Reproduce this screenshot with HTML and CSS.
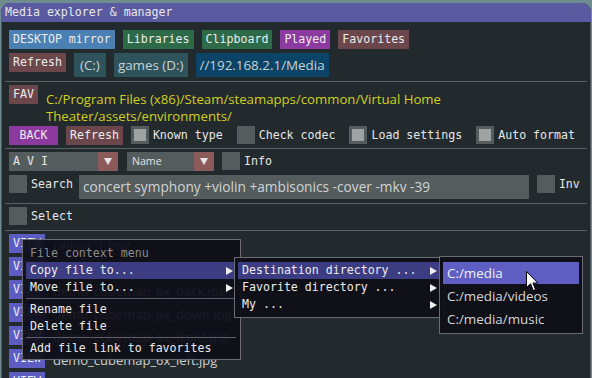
FILE: index.html
```html
<!DOCTYPE html>
<html lang="en">
<head>
  <meta charset="UTF-8">
  <title>Media explorer &amp; manager</title>
  <link rel="stylesheet" href="styles.css">
</head>
<body>
  <div class="window">
    <div class="titlebar">Media explorer &amp; manager</div>
    <div class="content">
      <div class="row">
        <span class="btn blue">DESKTOP mirror</span>
        <span class="btn green">Libraries</span>
        <span class="btn green">Clipboard</span>
        <span class="btn purple">Played</span>
        <span class="btn brown">Favorites</span>
      </div>
      <div class="row row-drives">
        <span class="btn brown">Refresh</span>
        <span class="btn drive drive-c">(C:)</span>
        <span class="btn drive">games (D:)</span>
        <span class="btn drive net">//192.168.2.1/Media</span>
      </div>
      <div class="sep"></div>
      <div class="row row-fav">
        <span class="btn brown">FAV</span>
        <div class="path">C:/Program Files (x86)/Steam/steamapps/common/Virtual Home Theater/assets/environments/</div>
      </div>
      <div class="row row-back">
        <span class="btn purple back">BACK</span>
        <span class="btn brown">Refresh</span>
        <span class="chk on"></span><span class="lbl">Known type</span>
        <span class="chk"></span><span class="lbl">Check codec</span>
        <span class="chk on"></span><span class="lbl">Load settings</span>
        <span class="chk on"></span><span class="lbl">Auto format</span>
      </div>
      <div class="sep sep-short"></div>
      <div class="row">
        <div class="combo combo-type"><span class="val">A V I</span><span class="arr"></span></div>
        <div class="combo combo-sort"><span class="val sans">Name</span><span class="arr"></span></div>
        <span class="chk"></span><span class="lbl">Info</span>
      </div>
      <div class="row row-search">
        <span class="chk"></span><span class="lbl">Search</span>
        <div class="input">concert symphony +violin +ambisonics -cover -mkv -39</div>
        <span class="chk"></span><span class="lbl">Inv</span>
      </div>
      <div class="sep"></div>
      <div class="row">
        <span class="chk"></span><span class="lbl">Select</span>
      </div>
      <div class="sep"></div>
      <div class="list">
        <div class="file"><span class="btn view">VIEW</span><span class="name">ceiling_1.png</span></div>
        <div class="file"><span class="btn view">VIEW</span><span class="name">dome_1920_d550_f120_FF3D.jpg</span></div>
        <div class="file"><span class="btn view">VIEW</span><span class="name">demo_cubemap_6x_back.jpg</span></div>
        <div class="file"><span class="btn view">VIEW</span><span class="name">demo_cubemap_6x_down.jpg</span></div>
        <div class="file"><span class="btn view">VIEW</span><span class="name">demo_cubemap_6x_front.jpg</span></div>
        <div class="file"><span class="btn view">VIEW</span><span class="name">demo_cubemap_6x_left.jpg</span></div>
        <div class="file"><span class="btn view">VIEW</span><span class="name">demo_cubemap_6x_right.jpg</span></div>
      </div>
    </div>
  </div>

  <!-- popup menus -->
  <div class="menu menu-file">
    <div class="item disabled">File context menu</div>
    <div class="item open"><span>Copy file to...</span><span class="sub"></span></div>
    <div class="item"><span>Move file to...</span><span class="sub"></span></div>
    <div class="msep"></div>
    <div class="item">Rename file</div>
    <div class="item">Delete file</div>
    <div class="msep"></div>
    <div class="item">Add file link to favorites</div>
  </div>

  <div class="menu menu-copy">
    <div class="item open"><span>Destination directory ...</span><span class="sub"></span></div>
    <div class="item"><span>Favorite directory ...</span><span class="sub"></span></div>
    <div class="item"><span>My ...</span><span class="sub"></span></div>
  </div>

  <div class="menu menu-dest">
    <div class="ditem hover">C:/media</div>
    <div class="ditem">C:/media/videos</div>
    <div class="ditem">C:/media/music</div>
  </div>

  <svg class="cursor" width="13" height="21" viewBox="0 0 13 21">
    <path d="M0.5 0.5 L0.5 16.5 L4.5 12.8 L7.3 19.5 L9.6 18.5 L6.9 12 L11.8 12 Z" fill="#fff" stroke="#000" stroke-width="1"/>
  </svg>
</body>
</html>
```

FILE: styles.css
```css
body {
  margin: 0; position: relative; height: 378px; overflow: hidden;
  background: #6f8d91; color: #e6e6e6;
  font-family: "DejaVu Sans Mono", monospace; font-size: 11.6px;
}
.window {
  margin: 3px 0 0 1px; width: 590px; height: 400px; box-sizing: border-box;
  background: #232a2e; border: 1px solid #4a5659; border-top: 0;
  border-radius: 9px 9px 0 0;
}
.titlebar {
  height: 19px; line-height: 19px; margin: 0 -1px; padding-left: 4px;
  background: #5a5aa1; color: #e8e8e8; border-radius: 9px 9px 0 0;
}
.content { padding: 8px 7px 0; }

.row { display: flex; align-items: flex-start; gap: 8px; }
.row > * { flex: none; }
.row + .row { margin-top: 4px; }
.sep { height: 1px; background: #596367; margin: 4px -4px 3px; }
.sep-short { margin-top: 3px; }

.btn {
  height: 19px; line-height: 19px; padding: 0 4px; white-space: nowrap;
  color: #ececec;
}
.blue { background: #4a80b3; }
.green { background: #2d6a48; }
.purple { background: #8c3aa0; }
.brown { background: #6b474b; }
.view { background: #5c5cc2; }
.back { width: 49px; padding: 0; text-align: center; }
.drive {
  height: 24px; line-height: 24px; background: #2f535b; color: #c9d2d4;
  font-family: "Open Sans", sans-serif; font-size: 13.4px;
}
.drive-c { width: 24px; text-align: center; }
.net { background: #0b4467; }

.row-fav .path {
  flex: 1; margin-top: 6px; line-height: 17px; color: #cfcf1f;
  font-family: "Open Sans", sans-serif; font-size: 13.2px;
}
.row-fav + .row-back { margin-top: 1px; }

.chk {
  width: 18px; height: 18px; box-sizing: border-box; padding: 3px;
  background: #555c5e;
}
.chk.on::after { content: ""; display: block; height: 100%; background: #9fa3a4; }
.lbl { line-height: 19px; margin-left: -4px; white-space: nowrap; }
.row-back .lbl { margin-right: 6px; }
.row-back .lbl:last-child { margin-right: 0; }

.combo { display: flex; height: 19px; background: #545c5e; }
.combo .val { flex: 1; line-height: 19px; padding-left: 4px; }
.combo .val.sans { font-family: "Open Sans", sans-serif; font-size: 10.6px; padding-left: 5px; }
.combo .arr {
  width: 20px; background: #8b5b5b; display: flex; align-items: center; justify-content: center;
}
.combo .arr::after {
  content: ""; border-left: 4.5px solid transparent; border-right: 4.5px solid transparent;
  border-top: 7px solid #e8e8e8;
}
.combo-type { width: 109px; }
.combo-sort { width: 87px; margin-left: 1px; }
.combo-sort + .chk { margin-left: 0; }

.row-search .input {
  width: 446px; height: 24px; line-height: 24px; padding-left: 4px;
  margin-left: -2px; background: #545c5e; color: #d0d4d4;
  font-family: "Open Sans", sans-serif; font-size: 13.7px; white-space: nowrap;
}

.list { margin-top: 3px; }
.file { display: flex; align-items: flex-start; gap: 8px; height: 19px; margin-bottom: 4px; }
.file .name {
  padding-top: 2px; color: #cfcfcf; white-space: nowrap;
  font-family: "Open Sans", sans-serif; font-size: 13px;
}

/* popups */
.menu {
  position: absolute; box-sizing: border-box;
  background: rgba(15, 15, 24, 0.94); border: 1px solid #6b6b73;
}
.menu .item {
  display: flex; justify-content: space-between; align-items: center;
  height: 17px; line-height: 17px; padding: 0 3px 0 4px; color: #ececec; white-space: nowrap;
}
.menu .item.disabled { color: #8c8c8c; }
.menu .item.open { background: #3c3c82; }
.menu .sub {
  width: 0; height: 0; border-top: 4px solid transparent; border-bottom: 4px solid transparent;
  border-left: 7px solid #eeeeee;
}
.msep { height: 1px; background: #5c5c66; margin: 2px 0; }

.menu-file { left: 22px; top: 239px; width: 219px; padding: 5px 4px 2px 3px; }
.menu-copy { left: 234px; top: 257px; width: 211px; padding: 4px 4px 4px 3px; }
.menu-dest { left: 439px; top: 256px; width: 144px; padding: 5px 3px 2px; }
.ditem {
  height: 22px; line-height: 22px; padding-left: 4px; margin-bottom: 1px;
  color: #d6d6d6; font-family: "Open Sans", sans-serif; font-size: 13.4px;
}
.ditem.hover { background: #5e5ec3; color: #f2f2f2; }

.cursor { position: absolute; left: 526px; top: 271px; }
```
